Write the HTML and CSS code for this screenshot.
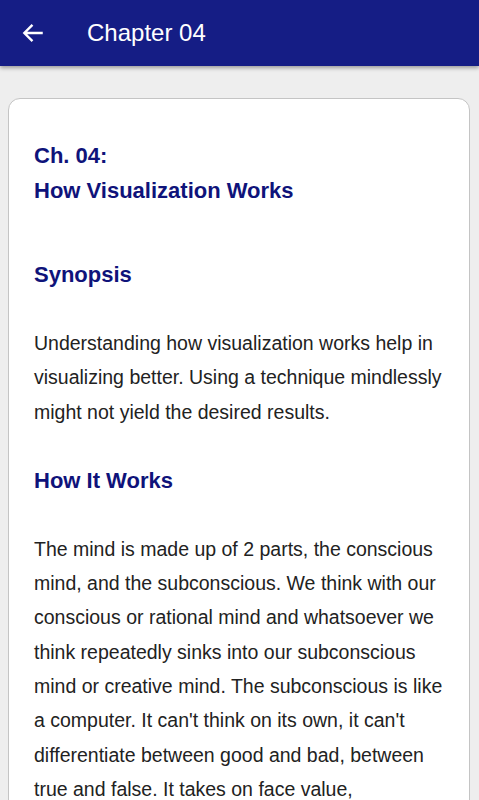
FILE: index.html
```html
<!DOCTYPE html>
<html>
<head>
<meta charset="utf-8">
<link rel="stylesheet" href="styles.css">
</head>
<body>
<header class="appbar">
  <svg class="back" width="24" height="24" viewBox="0 0 24 24"><path d="M21 12H4M11.5 4.5L4 12l7.5 7.5" fill="none" stroke="#fff" stroke-width="2.2"/></svg>
  <h1 class="title">Chapter 04</h1>
</header>
<main class="content">
  <article class="card">
    <h2 class="chapter">Ch. 04:<br>How Visualization Works</h2>
    <h3 class="section first">Synopsis</h3>
    <p class="text">Understanding how visualization works help in visualizing better. Using a technique mindlessly might not yield the desired results.</p>
    <h3 class="section">How It Works</h3>
    <p class="text">The mind is made up of 2 parts, the conscious mind, and the subconscious. We think with our conscious or rational mind and whatsoever we think repeatedly sinks into our subconscious mind or creative mind. The subconscious is like a computer. It can't think on its own, it can't differentiate between good and bad, between true and false. It takes on face value, whatsoever you feed it with and acts on it.</p>
  </article>
</main>
</body>
</html>
```
FILE: styles.css
```css
html, body {
  margin: 0;
  padding: 0;
}
body {
  background: #eeeeee;
  font-family: "Liberation Sans", Arial, sans-serif;
}
.appbar {
  height: 66px;
  background: #151d85;
  display: flex;
  align-items: center;
  box-shadow: 0 2px 4px rgba(0,0,0,0.35);
  position: relative;
}
.back {
  margin-left: 20px;
  width: 26px;
  height: 26px;
}
.title {
  margin: 0 0 0 41px;
  color: #fff;
  font-size: 24px;
  font-weight: normal;
}
.content {
  padding: 32px 9px 0 8px;
}
.card {
  background: #fff;
  border: 1px solid #c4c4c4;
  border-radius: 12px;
  padding: 39px 25px 40px 25px;
}
.chapter {
  margin: 0;
  font-size: 22px;
  line-height: 35px;
  font-weight: bold;
  color: #0f137a;
}
.section {
  margin: 34px 0 0 0;
  font-size: 22px;
  line-height: 35px;
  font-weight: bold;
  color: #0f137a;
}
.section.first {
  margin-top: 49px;
}
.text {
  margin: 34px 0 0 0;
  font-size: 19.5px;
  line-height: 34.3px;
  color: #222;
}
```
